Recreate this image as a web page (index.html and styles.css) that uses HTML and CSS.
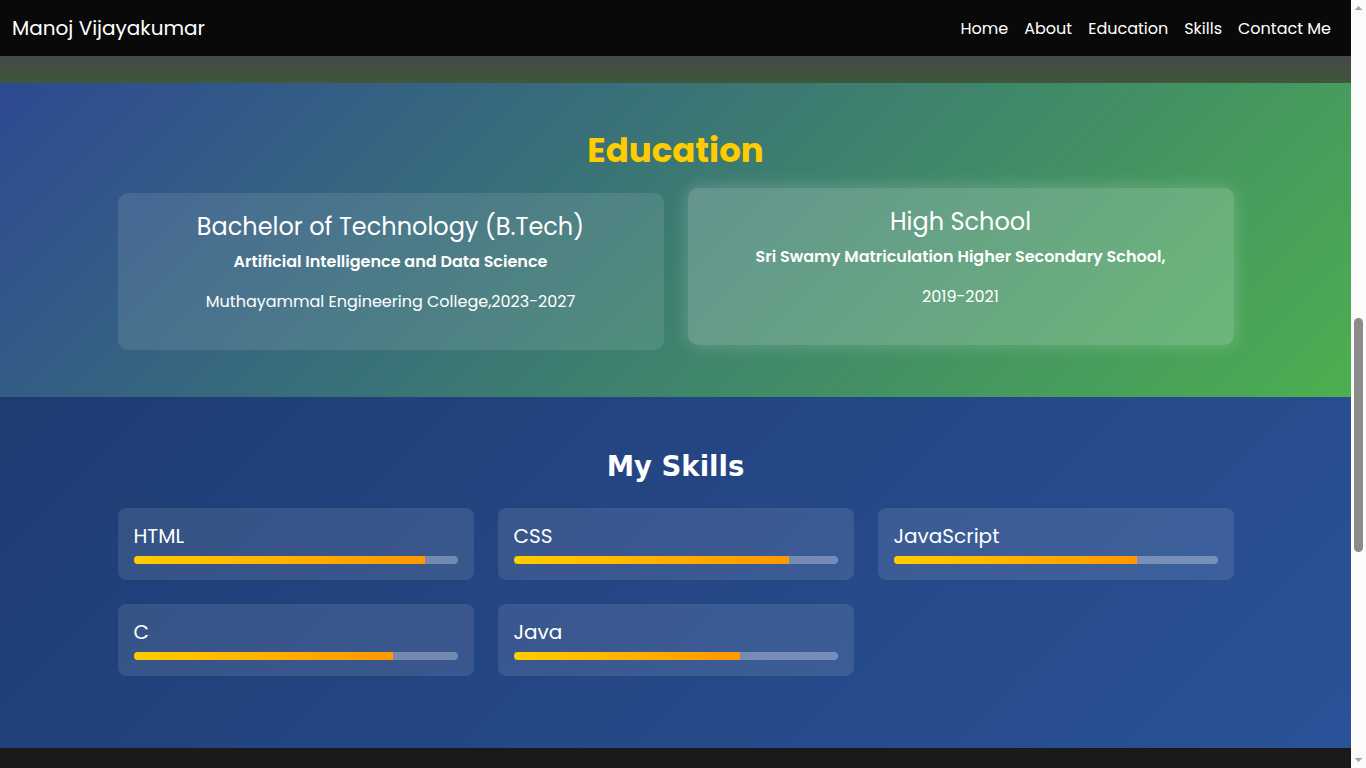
FILE: index.html
```html
<!DOCTYPE html>
<html lang="en">
<head>
<meta charset="UTF-8">
<title>Manoj Vijayakumar</title>
<link rel="stylesheet" href="styles.css">
</head>
<body>
<div class="page">
  <header class="site-header">
    <div class="brand">Manoj Vijayakumar</div>
    <nav class="nav">
      <a href="#home">Home</a>
      <a href="#about">About</a>
      <a href="#education">Education</a>
      <a href="#skills">Skills</a>
      <a href="#contact">Contact Me</a>
    </nav>
  </header>

  <div class="about-tail"></div>

  <section class="education" id="education">
    <h2 class="edu-title">Education</h2>
    <div class="edu-grid">
      <div class="edu-card">
        <h3 class="edu-degree">Bachelor of Technology (B.Tech)</h3>
        <p class="edu-field">Artificial Intelligence and Data Science</p>
        <p class="edu-place">Muthayammal Engineering College,2023-2027</p>
      </div>
      <div class="edu-card is-active">
        <h3 class="edu-degree">High School</h3>
        <p class="edu-field">Sri Swamy Matriculation Higher Secondary School,</p>
        <p class="edu-place">2019-2021</p>
      </div>
    </div>
  </section>

  <section class="skills" id="skills">
    <h2 class="skills-title">My Skills</h2>
    <div class="skill-grid">
      <div class="skill-card">
        <div class="skill-name">HTML</div>
        <div class="bar"><div class="fill" style="width:90%"></div></div>
      </div>
      <div class="skill-card">
        <div class="skill-name">CSS</div>
        <div class="bar"><div class="fill" style="width:85%"></div></div>
      </div>
      <div class="skill-card">
        <div class="skill-name">JavaScript</div>
        <div class="bar"><div class="fill" style="width:75%"></div></div>
      </div>
      <div class="skill-card">
        <div class="skill-name">C</div>
        <div class="bar"><div class="fill" style="width:80%"></div></div>
      </div>
      <div class="skill-card">
        <div class="skill-name">Java</div>
        <div class="bar"><div class="fill" style="width:70%"></div></div>
      </div>
    </div>
  </section>

  <div class="contact-head" id="contact"></div>
</div>

<aside class="scrollbar" aria-hidden="true">
  <svg class="sb-arrow" width="15" height="15" viewBox="0 0 15 15"><path d="M3.5 10 L7.5 6 L11.5 10 Z" fill="#a3a3a3"/></svg>
  <div class="sb-track"><div class="sb-thumb"></div></div>
  <svg class="sb-arrow" width="15" height="15" viewBox="0 0 15 15"><path d="M3.5 5 L7.5 9 L11.5 5 Z" fill="#a3a3a3"/></svg>
</aside>
</body>
</html>
```

FILE: styles.css
```css
* { box-sizing: border-box; }
html, body { height: 768px; overflow: hidden; }
body {
  margin: 0;
  display: flex;
  font-family: "Poppins", "DejaVu Sans", sans-serif;
  color: #fff;
  background: #1a1a1a;
}
.page {
  flex: 1;
  min-width: 0;
  display: flex;
  flex-direction: column;
}

/* header */
.site-header {
  height: 56px;
  flex: none;
  background: #090909;
  display: flex;
  align-items: center;
  justify-content: space-between;
  padding: 0 20px 0 12px;
}
.brand { font-size: 20px; }
.nav { display: flex; gap: 16px; }
.nav a { color: #fff; text-decoration: none; font-size: 16px; }

.about-tail {
  height: 27px;
  flex: none;
  background: linear-gradient(180deg, #464947 0%, #42503f 60%, #3d583c 100%);
}

/* education */
.education {
  height: 314px;
  flex: none;
  padding-top: 42px;
  background: linear-gradient(135deg, #2d4992 0%, #4caf50 100%);
}
.edu-title {
  margin: 0;
  text-align: center;
  color: #ffcc00;
  font-weight: 700;
  font-size: 34px;
  line-height: 50px;
}
.edu-grid {
  width: 1116px;
  margin: 18px auto 0;
  display: grid;
  grid-template-columns: 1fr 1fr;
  gap: 24px;
  align-items: start;
}
.edu-card {
  height: 157px;
  padding: 18px 20px 0;
  border-radius: 10px;
  background: rgba(255,255,255,0.1);
  text-align: center;
}
.edu-card.is-active {
  background: rgba(255,255,255,0.2);
  transform: translateY(-5px);
  box-shadow: 0 0 18px rgba(255,255,255,0.22);
}
.edu-degree {
  margin: 0;
  font-weight: 400;
  font-size: 24px;
  line-height: 31px;
}
.edu-field {
  margin: 8px 0 0;
  font-weight: 600;
  font-size: 16px;
  line-height: 24px;
}
.edu-place {
  margin: 16px 0 0;
  font-size: 16px;
  line-height: 24px;
}

/* skills */
.skills {
  height: 351px;
  flex: none;
  padding-top: 49px;
  background: linear-gradient(135deg, #1e3c72, #2a5298);
}
.skills-title {
  margin: 0;
  text-align: center;
  font-family: "DejaVu Sans", sans-serif;
  font-weight: 700;
  font-size: 27.5px;
  line-height: 40px;
}
.skill-grid {
  width: 1116px;
  margin: 22px auto 0;
  display: grid;
  grid-template-columns: repeat(3, 1fr);
  gap: 24px;
}
.skill-card {
  height: 72px;
  padding: 16px 16px 0;
  border-radius: 8px;
  background: rgba(255,255,255,0.1);
}
.skill-name {
  font-size: 20px;
  line-height: 24px;
}
.bar {
  margin-top: 8px;
  height: 8px;
  border-radius: 4px;
  background: rgba(255,255,255,0.3);
  overflow: hidden;
}
.fill {
  height: 100%;
  background: linear-gradient(90deg, #ffcc00, #ff9800);
}

.contact-head {
  flex: 1;
  background: #1a1a1a;
}

/* scrollbar */
.scrollbar {
  width: 15px;
  flex: none;
  height: 768px;
  background: #fbfbfb;
  display: flex;
  flex-direction: column;
  align-items: center;
}
.sb-arrow { flex: none; display: block; }
.sb-track { flex: 1; width: 15px; display: flex; flex-direction: column; align-items: center; }
.sb-thumb {
  margin-top: 303px;
  width: 9px;
  height: 234px;
  border-radius: 5px;
  background: #8b8b8b;
}
```
